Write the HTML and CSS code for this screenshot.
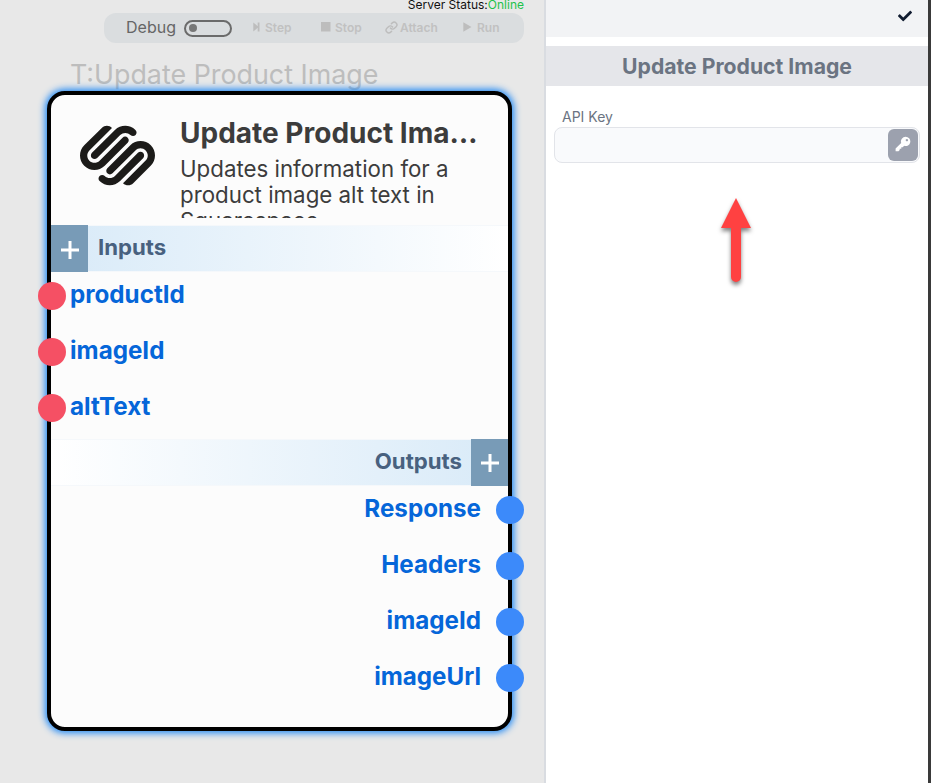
FILE: index.html
```html
<!DOCTYPE html>
<html lang="en">
<head>
<meta charset="utf-8">
<title>Update Product Image</title>
<link rel="stylesheet" href="styles.css">
</head>
<body>
<div class="app">
  <main class="canvas">
    <div class="status">Server Status:<span class="online">Online</span></div>
    <div class="toolbar">
      <span class="debug">Debug</span>
      <span class="toggle"></span>
      <span class="tool step"><svg width="7" height="10" viewBox="0 0 7 10"><path d="M.3 .5 4.7 4.3V.5H6.5V9.500H4.700V5.700L.3 9.500Z"/></svg>Step</span>
      <span class="tool stop"><svg width="10" height="10" viewBox="0 0 10 10"><rect width="9.500" height="9.500"/></svg>Stop</span>
      <span class="tool attach"><svg class="link" width="13" height="13" viewBox="0 0 24 24"><path d="M10 13a5 5 0 0 0 7.540.540l3-3a5 5 0 0 0-7.070-7.070l-1.720 1.710M14 11a5 5 0 0 0-7.540-.540l-3 3a5 5 0 0 0 7.070 7.070l1.710-1.710"/></svg>Attach</span>
      <span class="tool run"><svg width="9" height="10" viewBox="0 0 9 10"><path d="M.3 .3 8.500 5 .3 9.700Z"/></svg>Run</span>
    </div>
    <div class="node-tag">T:Update Product Image</div>

    <section class="node">
      <header class="node-head">
        <svg class="logo" width="75" height="75" viewBox="0 0 24 24"><path d="M22.655 8.719c-1.802-1.801-4.726-1.801-6.564 0l-7.351 7.350c-.450.450-.450 1.200 0 1.650.450.449 1.200.449 1.650 0l7.351-7.351c.899-.899 2.362-.899 3.264 0 .900.900.900 2.364 0 3.264l-7.239 7.239c.900.899 2.362.899 3.263 0l5.589-5.589c1.836-1.838 1.836-4.763.037-6.563zm-2.475 2.437c-.451-.450-1.201-.450-1.650 0l-7.354 7.389c-.900.899-2.361.899-3.262 0-.450-.450-1.200-.450-1.650 0s-.450 1.200 0 1.649c1.801 1.801 4.726 1.801 6.564 0l7.351-7.350c.449-.487.449-1.239.001-1.688zm-2.439-7.350c-1.801-1.801-4.726-1.801-6.564 0l-7.351 7.351c-.450.449-.450 1.199 0 1.649s1.200.450 1.650 0l7.395-7.351c.900-.899 2.371-.899 3.270 0 .451.450 1.201.450 1.650 0 .421-.487.421-1.199-.050-1.649zm-2.475 2.475c-.450-.450-1.200-.450-1.650 0l-7.351 7.389c-.899.900-2.363.900-3.265 0-.900-.899-.900-2.363 0-3.264l7.239-7.239c-.900-.900-2.362-.900-3.263 0L1.350 8.719c-1.800 1.800-1.800 4.725 0 6.563 1.801 1.801 4.725 1.801 6.564 0l7.350-7.351c.451-.488.451-1.238.002-1.650z"/></svg>
        <div class="node-text">
          <h1>Update Product Image</h1>
          <p>Updates information for a product image alt text in Squarespace</p>
        </div>
      </header>
      <div class="band inputs">
        <span class="plus"><svg width="20" height="20" viewBox="0 0 20 20"><path d="M10 1V19M1 10H19"/></svg></span>
        <h2>Inputs</h2>
      </div>
      <ul class="ports in">
        <li><i class="dot"></i>productId</li>
        <li><i class="dot"></i>imageId</li>
        <li><i class="dot"></i>altText</li>
      </ul>
      <div class="band outputs">
        <h2>Outputs</h2>
        <span class="plus"><svg width="20" height="20" viewBox="0 0 20 20"><path d="M10 1V19M1 10H19"/></svg></span>
      </div>
      <ul class="ports out">
        <li>Response<i class="dot"></i></li>
        <li>Headers<i class="dot"></i></li>
        <li>imageId<i class="dot"></i></li>
        <li>imageUrl<i class="dot"></i></li>
      </ul>
    </section>
  </main>

  <aside class="panel">
    <div class="panel-bar"><svg width="14" height="14" viewBox="0 0 512 512"><path d="M173.898 439.404l-166.400-166.400c-9.997-9.997-9.997-26.206 0-36.204l36.203-36.204c9.997-9.998 26.207-9.998 36.204 0L192 312.690 432.095 72.596c9.997-9.997 26.207-9.997 36.204 0l36.203 36.204c9.997 9.997 9.997 26.206 0 36.204l-294.400 294.401c-9.998 9.997-26.207 9.997-36.204-.001z"/></svg></div>
    <h2 class="panel-title">Update Product Image</h2>
    <div class="field">
      <label for="key">API Key</label>
      <div class="field-box">
        <input id="key" type="text">
        <button class="key-btn" type="button"><svg width="16" height="16" viewBox="0 0 16 16"><path fill-rule="evenodd" d="M10.600.7a4.700 4.700 0 1 1-1.500 9.150L7.800 11.200H6.300V12.700H4.700V14.100L3.500 15.300H.6V12.400L6.200 6.900A4.700 4.700 0 0 1 10.600.7ZM11.900 2.900a1.200 1.200 0 1 0 .01 0Z"/></svg></button>
      </div>
    </div>
    <svg class="arrow" width="44" height="100" viewBox="0 0 44 100"><path d="M22 8 37 38H27V87a5 5 0 0 1-10 0V38H7Z"/></svg>
  </aside>
</div>
</body>
</html>
```
FILE: styles.css
```css
* { box-sizing: border-box; }
body { margin: 0; font-family: Inter, "Liberation Sans", sans-serif; overflow: hidden; }
h1, h2, p, ul { margin: 0; padding: 0; }
svg { display: block; flex: none; }
.app { display: flex; width: 931px; height: 783px; }

.canvas { position: relative; width: 544px; background: #e8e8e8; }
.status { height: 13px; padding-right: 20px; text-align: right; font-size: 12px; line-height: 10px; color: #111; }
.online { color: #1fc24a; }
.toolbar { display: flex; align-items: center; width: 420px; height: 30px; margin-left: 104px; padding-left: 22px; border-radius: 12px; background: #dadddf; }
.debug { width: 58px; margin-top: -2px; font-size: 16px; color: #666; }
.toggle { width: 48px; height: 17px; border: 2px solid #6b6b6b; border-radius: 9px; display: flex; align-items: center; padding-left: 3px; }
.toggle::before { content: ""; width: 8px; height: 8px; border-radius: 50%; background: #777; }
.tool { display: flex; align-items: center; gap: 5px; margin-top: -1px; font-size: 12px; font-weight: 600; color: #c1c1c1; }
.tool svg { fill: #bdbdbd; margin-top: -1px; }
.tool .link { fill: none; stroke: #bdbdbd; stroke-width: 2.6; stroke-linecap: round; }
.step { width: 68px; margin-left: 21px; }
.stop { width: 64px; gap: 4px; }
.attach { width: 78px; gap: 2px; }
.node-tag { margin: 13px 0 0 70px; height: 36px; line-height: 36px; font-size: 26.85px; color: #bdbdbd; white-space: nowrap; }

.node { position: absolute; left: 47px; top: 91px; width: 465px; height: 640px; border: 4px solid #000; border-radius: 18px; background: #fcfcfc; box-shadow: 0 0 7px 2px #1e88f5; }
.node-head { display: flex; height: 130px; padding: 23px 28px 0 29px; }
.logo { fill: #1c1b19; }
.node-text { width: 300px; margin-left: 25px; height: 100px; overflow: hidden; color: #3c3c3c; }
.node-text h1 { height: 38px; line-height: 30px; font-size: 28px; font-weight: 700; white-space: nowrap; overflow: hidden; text-overflow: ellipsis; width: 298px; }
.node-text p { width: 290px; font-size: 22.3px; line-height: 26px; }
.band { display: flex; align-items: center; height: 47px; border: 1px solid #f5f8fb; border-width: 1px 0; color: #48617f; }
.band h2 { font-size: 22.2px; line-height: 28px; font-weight: 700; margin-top: -3px; }
.inputs { gap: 10px; background: linear-gradient(90deg, #d8eaf8, #fff); }
.outputs { gap: 9px; justify-content: flex-end; background: linear-gradient(90deg, #fff, #d8eaf8); }
.plus { display: grid; place-items: center; width: 37px; height: 47px; padding-top: 3px; background: #789bb7; }
.outputs .plus { padding-top: 1px; }
.plus path { stroke: #fff; stroke-width: 3; }
.ports { list-style: none; font-size: 24.2px; font-weight: 700; color: #0566d9; }
.ports li { display: flex; align-items: center; height: 56px; padding-bottom: 10px; line-height: 30px; }
.in { height: 167px; }
.dot { width: 28px; height: 28px; flex: none; border-radius: 50%; margin-top: 2px; }
.in li { gap: 4px; margin-left: -13px; }
.in .dot { background: #f55064; }
.out li { gap: 14.5px; justify-content: flex-end; margin-right: -15.5px; }
.out .dot { background: #3c8afa; }

.panel { width: 387px; border-left: 2px solid #d9dce1; border-right: 3px solid #3a3a3a; background: #fff; }
.panel-bar { display: flex; justify-content: flex-end; height: 37px; padding: 9px 16px 0 0; background: #f2f3f5; }
.panel-bar svg { fill: #111c30; }
.panel-title { height: 40px; margin-top: 9px; line-height: 40px; text-align: center; font-size: 21.2px; font-weight: 700; color: #6b7482; background: #e5e6ea; }
.field { padding: 22px 8px 0; }
.field label { display: block; height: 19px; padding-left: 8px; font-size: 14px; line-height: 18px; color: #6b7482; }
.field-box { display: flex; align-items: center; height: 36px; padding: 1px; border: 1px solid #e2e4e9; border-radius: 8px; background: #f9fafc; }
.field-box input { flex: 1; min-width: 0; height: 30px; padding: 0 10px; border: 0; outline: 0; background: none; font: inherit; }
.key-btn { display: grid; place-items: center; width: 30px; height: 32px; padding: 0 0 3px; border: 0; border-radius: 6px; background: #9ca1ae; }
.key-btn svg { fill: #fff; }
.arrow { margin: 27px 0 0 168px; fill: #ff4141; filter: drop-shadow(0 3px 2px rgba(0,0,0,.5)); }
```
